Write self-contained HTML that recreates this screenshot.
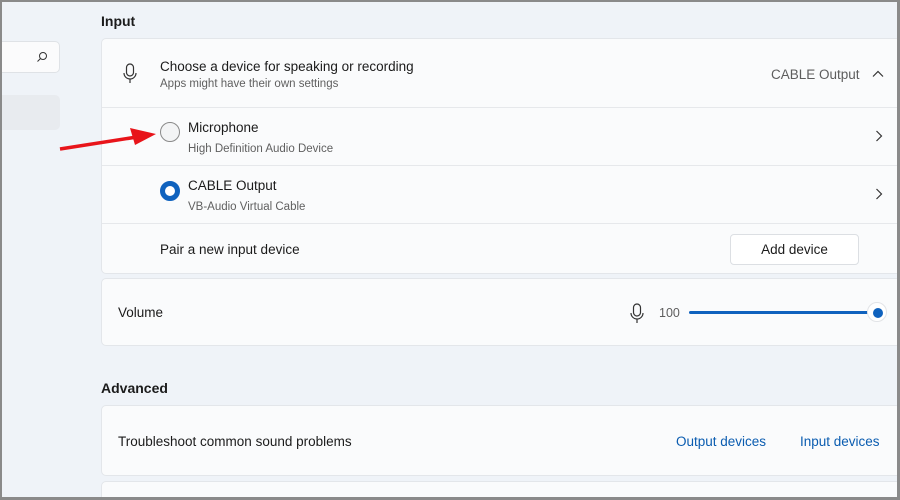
<!DOCTYPE html><html><head><style>
*{margin:0;padding:0;box-sizing:border-box}
body{width:900px;height:500px;overflow:hidden;background:#8a8a8a;font-family:"Liberation Sans",sans-serif;position:relative}
#w{position:absolute;left:2px;top:2px;width:895px;height:495px;background:#eff3f8;overflow:hidden}
.a{position:absolute}
.card{position:absolute;left:99px;width:800px;background:#fafbfc;border:1px solid #e3e6ea;border-radius:5px}
.t{font-size:13.5px;color:#1b1b1b}
.s{font-size:11.5px;color:#606060}
.hr{position:absolute;left:0;right:0;height:1px;background:#e6e8eb}
</style></head><body><div id="w">
<div class="a" style="left:-5px;top:39px;width:63px;height:32px;background:#fbfbfc;border:1px solid #dfe2e6;border-radius:5px"></div>
<svg class="a" style="left:34px;top:49px" width="12" height="12" viewBox="0 0 12 12"><circle cx="7" cy="5" r="3.5" fill="none" stroke="#333" stroke-width="1"/><path d="M4.5 7.5L1.5 10.5" stroke="#333"/></svg>
<div class="a" style="left:-5px;top:93px;width:63px;height:35px;background:#e8ebef;border-radius:5px"></div>
<div class="a t" style="left:99px;top:11px;font-weight:bold;font-size:14px">Input</div>
<div class="card" style="top:36px;height:236px">
 <svg class="a" style="left:20px;top:24px" width="16" height="22" viewBox="0 0 16 22"><rect x="4.5" y="1" width="7" height="12" rx="3.5" fill="none" stroke="#333" stroke-width="1.2"/><path d="M2 10a6 6 0 0 0 12 0M8 16v4" fill="none" stroke="#333" stroke-width="1.2"/></svg>
 <div class="a t" style="left:58px;top:20px">Choose a device for speaking or recording</div>
 <div class="a s" style="left:58px;top:39px">Apps might have their own settings</div>
 <div class="a" style="left:669px;top:28px;font-size:13.5px;color:#5d5d5d">CABLE Output</div>
 <svg class="a" style="left:770px;top:31px" width="12" height="8" viewBox="0 0 12 8"><path d="M1 6.5L6 1.5L11 6.5" fill="none" stroke="#333" stroke-width="1.2"/></svg>
 <div class="hr" style="top:68px"></div>
 <div class="a" style="left:58px;top:83px;width:20px;height:20px;border:1px solid #8a8a8a;border-radius:50%;background:#f3f4f5"></div>
 <div class="a t" style="left:86px;top:81px">Microphone</div>
 <div class="a s" style="left:86px;top:104px">High Definition Audio Device</div>
 <svg class="a" style="left:773px;top:91px" width="8" height="12" viewBox="0 0 8 12"><path d="M1.5 1L6.5 6L1.5 11" fill="none" stroke="#333" stroke-width="1.2"/></svg>
 <div class="hr" style="top:126px"></div>
 <div class="a" style="left:58px;top:142px;width:20px;height:20px;border:5.5px solid #0f62be;border-radius:50%;background:#fff"></div>
 <div class="a t" style="left:86px;top:139px">CABLE Output</div>
 <div class="a s" style="left:86px;top:162px">VB-Audio Virtual Cable</div>
 <svg class="a" style="left:773px;top:149px" width="8" height="12" viewBox="0 0 8 12"><path d="M1.5 1L6.5 6L1.5 11" fill="none" stroke="#333" stroke-width="1.2"/></svg>
 <div class="hr" style="top:184px"></div>
 <div class="a t" style="left:58px;top:203px">Pair a new input device</div>
 <div class="a" style="left:628px;top:195px;width:129px;height:31px;background:#fff;border:1px solid #dcdfe3;border-radius:4px;font-size:13.5px;color:#1b1b1b;text-align:center;line-height:29px">Add device</div>
</div>
<div class="card" style="top:276px;height:68px">
 <div class="a t" style="left:16px;top:26px">Volume</div>
 <svg class="a" style="left:527px;top:24px" width="16" height="22" viewBox="0 0 16 22"><rect x="4.5" y="1" width="7" height="12" rx="3.5" fill="none" stroke="#333" stroke-width="1.2"/><path d="M2 10a6 6 0 0 0 12 0M8 16v4" fill="none" stroke="#333" stroke-width="1.2"/></svg>
 <div class="a" style="left:557px;top:27px;font-size:12.5px;color:#5d5d5d">100</div>
 <div class="a" style="left:587px;top:32px;width:185px;height:3px;background:#0f62be;border-radius:2px"></div>
 <div class="a" style="left:765px;top:23px;width:20px;height:20px;border-radius:50%;background:#fff;border:1px solid #e2e4e7"></div>
 <div class="a" style="left:771px;top:29px;width:10px;height:10px;border-radius:50%;background:#0f62be"></div>
</div>
<div class="a t" style="left:99px;top:378px;font-weight:bold;font-size:14px">Advanced</div>
<div class="card" style="top:403px;height:71px">
 <div class="a t" style="left:16px;top:28px">Troubleshoot common sound problems</div>
 <div class="a" style="left:574px;top:28px;font-size:13.5px;color:#0a5cb0">Output devices</div>
 <div class="a" style="left:698px;top:28px;font-size:13.5px;color:#0a5cb0">Input devices</div>
</div>
<div class="card" style="top:479px;height:40px"></div>
<svg class="a" style="left:50px;top:122px" width="110" height="35" viewBox="0 0 110 35"><path d="M8 25L85 13" stroke="#e8141a" stroke-width="3.5"/><path d="M104 10L78 4L83 21Z" fill="#e8141a"/></svg>
</div></body></html>
